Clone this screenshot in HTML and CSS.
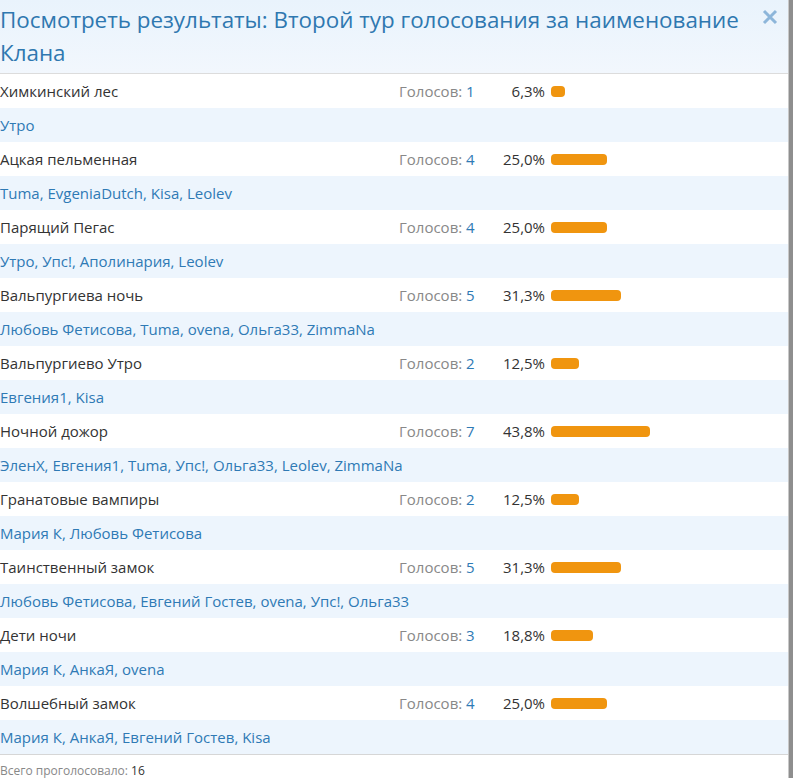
FILE: index.html
```html
<!DOCTYPE html>
<html lang="ru">
<head>
<meta charset="utf-8">
<title>Посмотреть результаты</title>
<link rel="stylesheet" href="styles.css">
</head>
<body>
<div class="dialog">
  <div class="header">
    <h1 class="title">Посмотреть результаты: Второй тур голосования за наименование Клана</h1>
    <svg class="close" width="16" height="16" viewBox="0 0 16 16" aria-label="Закрыть"><path d="M2 2L14 14M14 2L2 14" stroke="#8db6da" stroke-width="3" stroke-linecap="butt"/></svg>
  </div>
  <div class="results">
    <div class="row opt"><span class="name">Химкинский лес</span><span class="votes">Голосов: <a>1</a></span><span class="pct">6,3%</span><span class="bar" style="width:14px"></span></div>
    <div class="row voters"><a>Утро</a></div>
    <div class="row opt"><span class="name">Ацкая пельменная</span><span class="votes">Голосов: <a>4</a></span><span class="pct">25,0%</span><span class="bar" style="width:56px"></span></div>
    <div class="row voters"><a>Tuma, EvgeniaDutch, Kisa, Leolev</a></div>
    <div class="row opt"><span class="name">Парящий Пегас</span><span class="votes">Голосов: <a>4</a></span><span class="pct">25,0%</span><span class="bar" style="width:56px"></span></div>
    <div class="row voters"><a>Утро, Упс!, Аполинария, Leolev</a></div>
    <div class="row opt"><span class="name">Вальпургиева ночь</span><span class="votes">Голосов: <a>5</a></span><span class="pct">31,3%</span><span class="bar" style="width:70px"></span></div>
    <div class="row voters"><a>Любовь Фетисова, Tuma, ovena, Ольга33, ZimmaNa</a></div>
    <div class="row opt"><span class="name">Вальпургиево Утро</span><span class="votes">Голосов: <a>2</a></span><span class="pct">12,5%</span><span class="bar" style="width:28px"></span></div>
    <div class="row voters"><a>Евгения1, Kisa</a></div>
    <div class="row opt"><span class="name">Ночной дожор</span><span class="votes">Голосов: <a>7</a></span><span class="pct">43,8%</span><span class="bar" style="width:99px"></span></div>
    <div class="row voters"><a>ЭленХ, Евгения1, Tuma, Упс!, Ольга33, Leolev, ZimmaNa</a></div>
    <div class="row opt"><span class="name">Гранатовые вампиры</span><span class="votes">Голосов: <a>2</a></span><span class="pct">12,5%</span><span class="bar" style="width:28px"></span></div>
    <div class="row voters"><a>Мария К, Любовь Фетисова</a></div>
    <div class="row opt"><span class="name">Таинственный замок</span><span class="votes">Голосов: <a>5</a></span><span class="pct">31,3%</span><span class="bar" style="width:70px"></span></div>
    <div class="row voters"><a>Любовь Фетисова, Евгений Гостев, ovena, Упс!, Ольга33</a></div>
    <div class="row opt"><span class="name">Дети ночи</span><span class="votes">Голосов: <a>3</a></span><span class="pct">18,8%</span><span class="bar" style="width:42px"></span></div>
    <div class="row voters"><a>Мария К, АнкаЯ, ovena</a></div>
    <div class="row opt"><span class="name">Волшебный замок</span><span class="votes">Голосов: <a>4</a></span><span class="pct">25,0%</span><span class="bar" style="width:56px"></span></div>
    <div class="row voters"><a>Мария К, АнкаЯ, Евгений Гостев, Kisa</a></div>
  </div>
  <div class="footer">Всего проголосовало: <b>16</b></div>
</div>
</body>
</html>
```
FILE: styles.css
```css
html, body {
  margin: 0;
  padding: 0;
  height: 100%;
}
body {
  background: #8e8e8e;
  font-family: "Open Sans", "Noto Sans", sans-serif;
  overflow: hidden;
}
.dialog {
  width: 788px;
  height: 778px;
  background: #fff;
  border-right: 1px solid #c8c8c8;
}
.header {
  display: flex;
  align-items: flex-start;
  justify-content: space-between;
  height: 73px;
  border-bottom: 1px solid #dcdcdc;
  background: linear-gradient(#e9f3fc, #f2f7fd);
}
.title {
  margin: 0;
  padding-top: 3px;
  width: 750px;
  font-size: 22.4px;
  font-weight: normal;
  line-height: 33px;
  color: #2f78b0;
}
.close {
  flex: none;
  margin: 9px 10px 0 0;
}
.row {
  height: 34px;
  display: flex;
  align-items: center;
  font-size: 15px;
  color: #333;
}
.voters {
  background: #edf5fd;
}
.voters a, .votes a {
  color: #2f7ab5;
}
.name {
  width: 399px;
}
.votes {
  width: 96px;
  color: #888;
}
.pct {
  width: 50px;
  text-align: right;
  color: #333;
}
.bar {
  margin-left: 6px;
  height: 11px;
  border-radius: 4px;
  background: #f0950f;
}
.results {
  border-bottom: 1px solid #d6d6d6;
}
.footer {
  padding-top: 8px;
  font-size: 12px;
  line-height: 16px;
  color: #888;
}
.footer b {
  font-weight: normal;
  color: #333;
}
```
